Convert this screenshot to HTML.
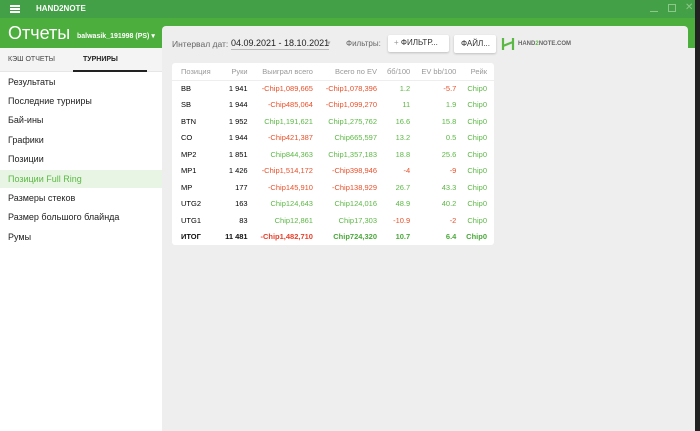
<!DOCTYPE html>
<html><head><meta charset="utf-8"><style>
*{margin:0;padding:0;box-sizing:border-box}
body{width:700px;height:431px;overflow:hidden;background:#222;font-family:"Liberation Sans",sans-serif;position:relative}
.app{position:absolute;left:0;top:0;width:695px;height:431px;background:#eeeeee}
.top{position:absolute;left:0;top:0;width:695px;height:18px;background:#43a047}
.hdr{position:absolute;left:0;top:18px;width:695px;height:30px;background:#4cae3c}
.side{position:absolute;left:0;top:48px;width:162px;height:383px;background:#fff}
.card{position:absolute;left:162px;top:26px;width:526px;height:405px;background:#eeeeee;border-radius:4px 4px 0 0}
.t{position:absolute;white-space:nowrap}
.menu div{position:absolute;left:8px;font-size:9px;color:#222}
table{position:absolute;left:172px;top:63px;width:322px;background:#fff;border-collapse:collapse;font-size:7.5px;border-radius:3px}
td,th{text-align:right;padding:0 7px 0 0;height:16.5px;white-space:nowrap}
th{font-weight:normal;color:#999;height:17px;border-bottom:1px solid #eee}
td:first-child,th:first-child{text-align:left;padding-left:9px}
.r{color:#e8502a}.g{color:#5cb845}
tr.tot td{font-weight:bold;color:#111}
tr.tot td.r{color:#e8402a}tr.tot td.g{color:#4aa83a}
</style></head><body>
<div class="app">
<div class="top"></div>
<div style="position:absolute;left:10px;top:5px;width:10px;height:1.5px;background:#fff;box-shadow:0 3px 0 #fff,0 6px 0 #fff"></div>
<div class="t" style="left:36px;top:4px;color:#fff;font-size:8px;font-weight:bold">HAND2NOTE</div>
<div style="position:absolute;left:650px;top:11px;width:8px;height:1px;background:#8cc88a"></div>
<div style="position:absolute;left:668px;top:4px;width:8px;height:8px;border:1px solid #8cc88a"></div>
<div class="t" style="left:685px;top:2px;color:#8cc88a;font-size:10px">✕</div>
<div class="hdr"></div>
<div class="t" style="left:8px;top:23px;color:#fff;font-size:18px">Отчеты</div>
<div class="t" style="left:77px;top:32px;color:#fff;font-size:7px;font-weight:bold">balwasik_191998 (PS) ▾</div>
<div class="side"></div>
<div style="position:absolute;left:0;top:48px;width:162px;height:24px;background:#f4f4f4;border-bottom:1px solid #e6e6e6"></div>
<div class="t" style="left:8px;top:56px;font-size:7px;color:#444">КЭШ ОТЧЕТЫ</div>
<div class="t" style="left:83px;top:56px;font-size:7px;color:#222;font-weight:bold">ТУРНИРЫ</div>
<div style="position:absolute;left:73px;top:70px;width:74px;height:2px;background:#222"></div>
<div style="position:absolute;left:0;top:170px;width:162px;height:18px;background:#e8f5e4"></div>
<div class="menu">
<div style="top:77px">Результаты</div>
<div style="top:96px">Последние турниры</div>
<div style="top:115px">Бай-ины</div>
<div style="top:135px">Графики</div>
<div style="top:154px">Позиции</div>
<div style="top:174px;color:#5cb845">Позиции Full Ring</div>
<div style="top:193px">Размеры стеков</div>
<div style="top:212px">Размер большого блайнда</div>
<div style="top:232px">Румы</div>
</div>
<div class="card"></div>
<div class="t" style="left:172px;top:39px;font-size:8.5px;color:#666">Интервал дат:</div>
<div class="t" style="left:231px;top:38px;font-size:9px;color:#222;border-bottom:1px solid #bbb;padding-bottom:1px">04.09.2021 - 18.10.2021</div>
<div class="t" style="left:327px;top:39px;font-size:7px;color:#aaa">▾</div>
<div class="t" style="left:346px;top:39px;font-size:8px;color:#666">Фильтры:</div>
<div style="position:absolute;left:388px;top:35px;width:61px;height:17px;background:#fff;border-radius:2px;box-shadow:0 1px 2px rgba(0,0,0,.2);font-size:8px;color:#333;padding:3px 0 0 6px"><span style="color:#999">+</span> ФИЛЬТР...</div>
<div style="position:absolute;left:454px;top:35px;width:42px;height:18px;background:#fff;border-radius:2px;box-shadow:0 1px 2px rgba(0,0,0,.2);font-size:8px;color:#333;padding:4px 0 0 7px">ФАЙЛ...</div>
<svg style="position:absolute;left:501px;top:37px" width="14" height="14"><path d="M2 1v12M12 1v12M2 9L12 5" stroke="#5cb845" stroke-width="2.2" fill="none"/></svg>
<div class="t" style="left:518px;top:41px;font-size:6px;color:#666;font-weight:bold">HAND<span style="color:#5cb845">2</span>NOTE.COM</div>
<table>
<tr><th>Позиция</th><th>Руки</th><th>Выиграл всего</th><th>Всего по EV</th><th>бб/100</th><th>EV bb/100</th><th>Рейк</th></tr>
<tr><td>BB</td><td>1 941</td><td class="r">-Chip1,089,665</td><td class="r">-Chip1,078,396</td><td class="g">1.2</td><td class="r">-5.7</td><td class="g">Chip0</td></tr>
<tr><td>SB</td><td>1 944</td><td class="r">-Chip485,064</td><td class="r">-Chip1,099,270</td><td class="g">11</td><td class="g">1.9</td><td class="g">Chip0</td></tr>
<tr><td>BTN</td><td>1 952</td><td class="g">Chip1,191,621</td><td class="g">Chip1,275,762</td><td class="g">16.6</td><td class="g">15.8</td><td class="g">Chip0</td></tr>
<tr><td>CO</td><td>1 944</td><td class="r">-Chip421,387</td><td class="g">Chip665,597</td><td class="g">13.2</td><td class="g">0.5</td><td class="g">Chip0</td></tr>
<tr><td>MP2</td><td>1 851</td><td class="g">Chip844,363</td><td class="g">Chip1,357,183</td><td class="g">18.8</td><td class="g">25.6</td><td class="g">Chip0</td></tr>
<tr><td>MP1</td><td>1 426</td><td class="r">-Chip1,514,172</td><td class="r">-Chip398,946</td><td class="r">-4</td><td class="r">-9</td><td class="g">Chip0</td></tr>
<tr><td>MP</td><td>177</td><td class="r">-Chip145,910</td><td class="r">-Chip138,929</td><td class="g">26.7</td><td class="g">43.3</td><td class="g">Chip0</td></tr>
<tr><td>UTG2</td><td>163</td><td class="g">Chip124,643</td><td class="g">Chip124,016</td><td class="g">48.9</td><td class="g">40.2</td><td class="g">Chip0</td></tr>
<tr><td>UTG1</td><td>83</td><td class="g">Chip12,861</td><td class="g">Chip17,303</td><td class="r">-10.9</td><td class="r">-2</td><td class="g">Chip0</td></tr>
<tr class="tot"><td>ИТОГ</td><td>11 481</td><td class="r">-Chip1,482,710</td><td class="g">Chip724,320</td><td class="g">10.7</td><td class="g">6.4</td><td class="g">Chip0</td></tr>
</table>
</div>
</body></html>
